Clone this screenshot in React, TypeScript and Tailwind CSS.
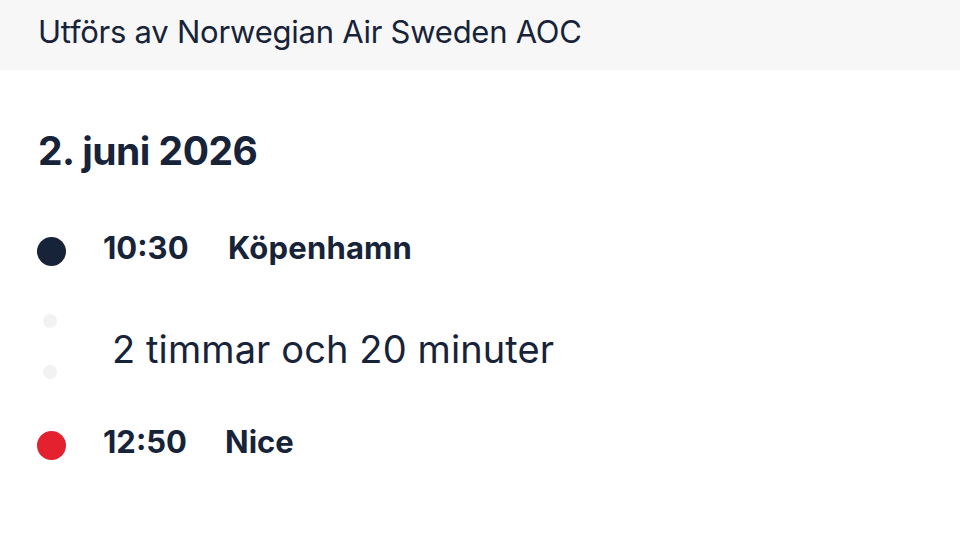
import React from "react";

export default function App() {
  const font = { fontFamily: "Inter, 'Noto Sans', sans-serif" };
  return (
    <div className="w-[960px] h-[541px] bg-white text-[#172338] overflow-hidden" style={font}>
      <div className="h-[70px] bg-[#f7f7f7] flex items-center px-[38px] pb-[8px]">
        <span className="text-[31px] leading-none tracking-[-0.25px]">Utförs av Norwegian Air Sweden AOC</span>
      </div>
      <div className="px-[37px]">
        <div className="h-[60px] mt-[50px] flex items-center pl-[1px]">
          <h1 className="text-[39px] font-bold leading-none tracking-[-0.5px]">2. juni 2026</h1>
        </div>
        <div className="mt-[51px] h-[40px] flex items-center">
          <div className="w-[29px] h-[29px] rounded-full bg-[#172338]" />
          <div className="flex items-center pb-[8px]">
            <span className="ml-[37px] w-[125px] text-[31px] font-bold leading-none">10:30</span>
            <span className="text-[31px] font-bold leading-none tracking-[0.2px]">Köpenhamn</span>
          </div>
        </div>
        <div className="h-[154px] flex">
          <div className="w-[29px] flex flex-col items-center pt-[43px] gap-[37px] pr-[4px]">
            <div className="w-[14px] h-[14px] rounded-full bg-[#f2f2f2]" />
            <div className="w-[14px] h-[14px] rounded-full bg-[#f2f2f2]" />
          </div>
          <div className="ml-[46px] flex items-center pt-[2px]">
            <span className="text-[38px] leading-none tracking-[0.1px]">2 timmar och 20 minuter</span>
          </div>
        </div>
        <div className="h-[40px] flex items-center">
          <div className="w-[29px] h-[29px] rounded-full bg-[#e3212f]" />
          <div className="flex items-center pb-[8px]">
            <span className="ml-[37px] w-[122px] text-[31px] font-bold leading-none">12:50</span>
            <span className="text-[31px] font-bold leading-none">Nice</span>
          </div>
        </div>
      </div>
    </div>
  );
}
